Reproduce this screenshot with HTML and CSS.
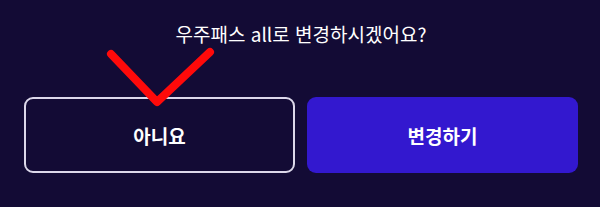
FILE: index.html
```html
<!DOCTYPE html>
<html lang="ko">
<head>
    <meta charset="UTF-8">
    <meta name="viewport" content="width=device-width, initial-scale=1.0">
    <title>우주패스 변경</title>
    <link rel="stylesheet" href="styles.css">
</head>
<body>
    <div class="dialog">
        <p class="dialog-title">우주패스 all로 변경하시겠어요?</p>
        <div class="dialog-actions">
            <button class="btn btn-outline">아니요</button>
            <button class="btn btn-primary">변경하기</button>
        </div>
        <!-- red check mark drawn over the dialog -->
        <svg class="check-mark" width="600" height="207" viewBox="0 0 600 207">
            <polyline points="111,54 157,102 210,52" fill="none" stroke="#ff0a0a" stroke-width="8" stroke-linecap="round" stroke-linejoin="round"/>
        </svg>
    </div>
</body>
</html>
```

FILE: styles.css
```css
body {
    margin: 0;
    padding: 0;
    background-color: #130b35;
    font-family: "Noto Sans CJK KR", "Noto Sans", sans-serif;
    color: #fff;
}
.dialog {
    position: relative;
    height: 207px;
    padding: 0 22px 0 24px;
    overflow: hidden;
}
.dialog-title {
    margin: 0;
    padding-top: 22px;
    font-size: 19px;
    font-weight: 400;
    line-height: 24px;
    text-align: center;
}
.dialog-actions {
    display: grid;
    grid-template-columns: 1fr 1fr;
    gap: 12px;
    margin-top: 51px;
}
.btn {
    height: 76px;
    border-radius: 9px;
    font-family: inherit;
    font-size: 19px;
    font-weight: bold;
    color: #fff;
    cursor: pointer;
}
.btn-outline {
    background-color: #130b35;
    border: 2px solid #dcd8ea;
}
.btn-primary {
    background-color: #3318cf;
    border: none;
}
.check-mark {
    position: absolute;
    left: 0;
    top: 0;
    pointer-events: none;
}
```
